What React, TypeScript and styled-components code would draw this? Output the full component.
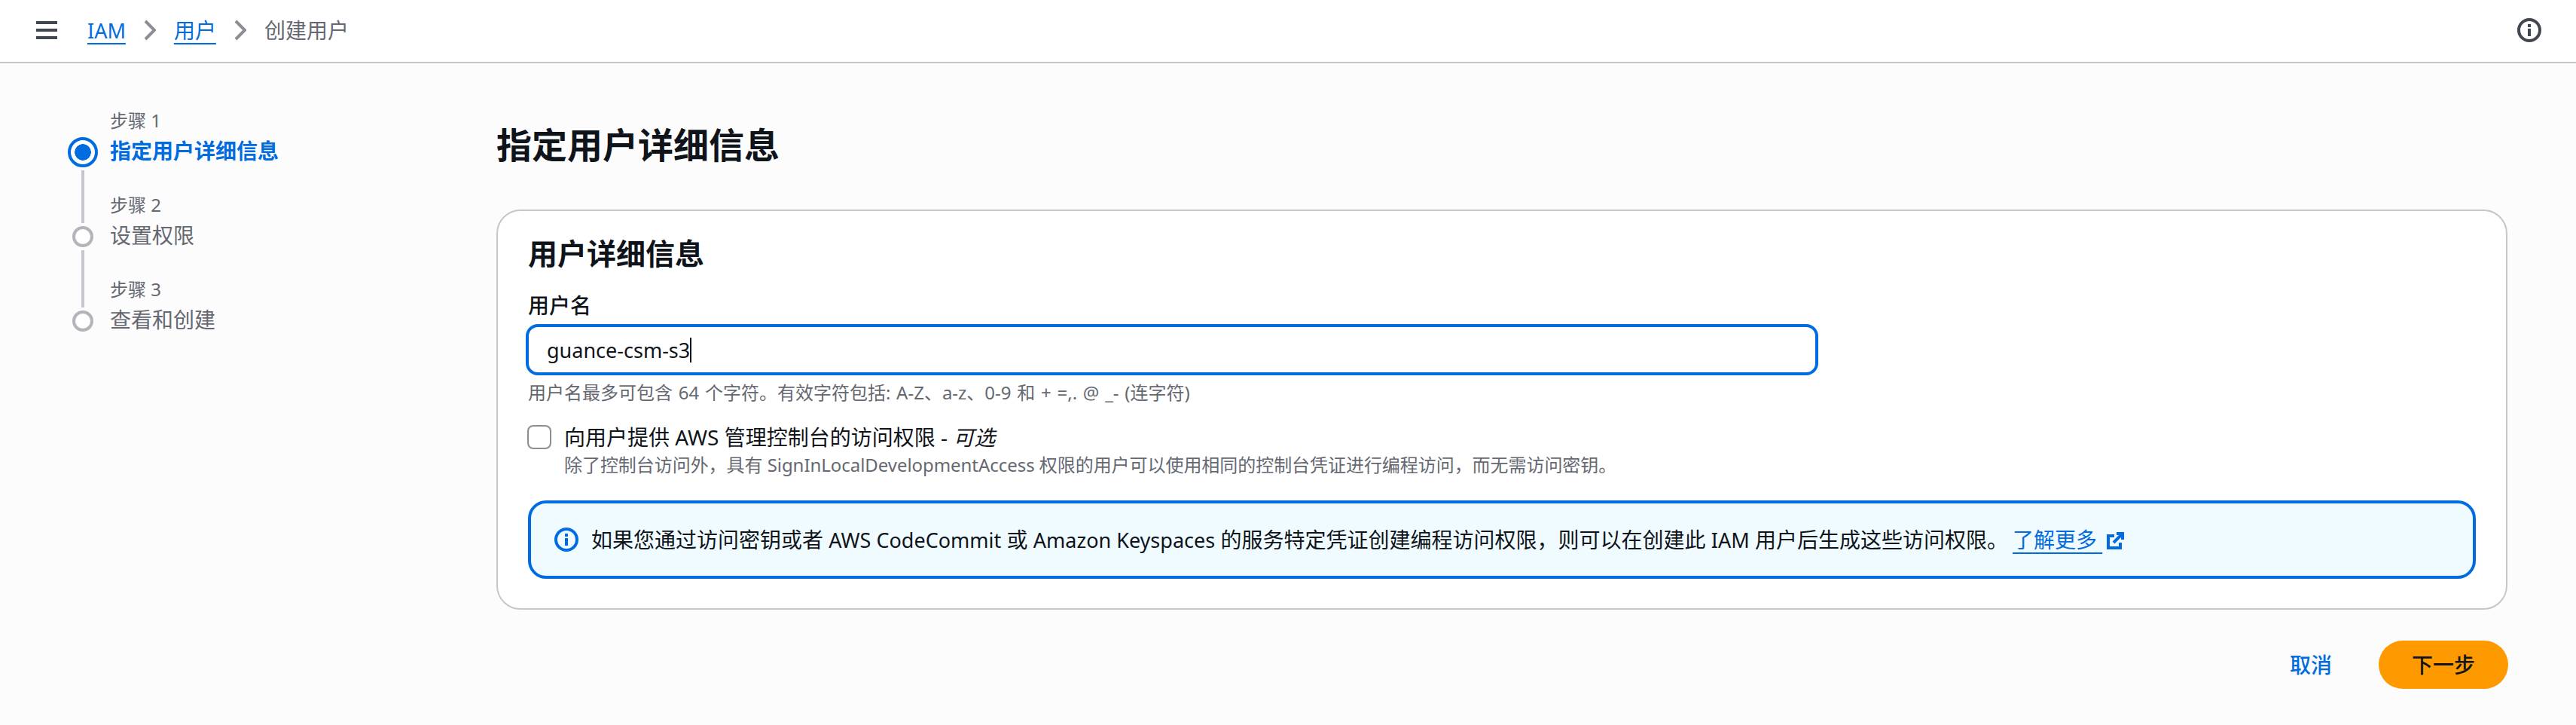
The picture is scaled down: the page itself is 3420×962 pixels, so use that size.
import styled, { createGlobalStyle } from 'styled-components';

const fontStack = '"Noto Sans", "Noto Sans CJK SC", sans-serif';

const GlobalStyle = createGlobalStyle`
  * {
    box-sizing: border-box;
  }

  body {
    margin: 0;
    background: #fcfcfc;
    color: #0f141a;
    font-family: ${fontStack};
  }
`;

const Page = styled.div`
  width: 3420px;
  height: 962px;
  overflow: hidden;
`;

const Header = styled.header`
  display: flex;
  align-items: center;
  justify-content: space-between;

  height: 84px;
  padding: 0 46px 2px 48px;

  border-bottom: 2px solid #c6c6cd;
  background: #fff;
`;

const Breadcrumbs = styled.nav`
  display: flex;
  align-items: center;

  font-size: 28px;
  line-height: 40px;
`;

const MenuButton = styled.svg`
  display: block;
  width: 28px;
  height: 24px;
  margin-right: 40px;
`;

const Chevron = styled.svg`
  display: block;
  width: 16px;
  height: 28px;
  margin: 0 24px;
`;

const Crumb = styled.a`
  color: #006ce0;
  text-decoration: underline 2px;
  text-underline-offset: 6px;
`;

const CurrentCrumb = styled.span`
  color: #656871;
`;

const TopInfo = styled.svg`
  display: block;
  width: 32px;
  height: 32px;
`;

const Latin = styled.span`
  font-size: 27px;
`;

const Body = styled.div`
  display: flex;
  padding: 60px 91px 0 90px;
`;

const Sidebar = styled.ol`
  display: flex;
  flex-direction: column;
  flex: none;

  width: 569px;
  margin: 0;
  padding: 0;

  list-style: none;
`;

const Step = styled.li<{ $height: number }>`
  display: flex;
  gap: 16px;

  height: ${p => p.$height}px;
`;

const Rail = styled.div`
  display: flex;
  flex-direction: column;
  align-items: center;
  justify-content: flex-end;

  width: 40px;
`;

const Connector = styled.span<{ $top: number }>`
  flex: 1;

  width: 4px;
  margin: ${p => p.$top}px 0 -2px;

  background: #c6c6cd;
`;

const Dot = styled.span<{ $active?: boolean }>`
  display: flex;
  flex: none;
  align-items: center;
  justify-content: center;

  height: 40px;

  &::before {
    content: '';
    display: block;
    box-sizing: border-box;
    width: ${p => (p.$active ? 40 : 28)}px;
    height: ${p => (p.$active ? 40 : 28)}px;

    border: 4px solid ${p => (p.$active ? '#006ce0' : '#b4b4bb')};
    border-radius: 50%;
    background: ${p => (p.$active ? 'radial-gradient(circle, #006ce0 10.5px, #fff 11px)' : '#fff')};
  }
`;

const StepText = styled.div`
  display: flex;
  flex-direction: column;
  justify-content: flex-end;
  gap: 4px;

  padding-bottom: 2px;
`;

const StepLabel = styled.span`
  color: #656871;
  font-size: 24px;
  line-height: 32px;
`;

const StepTitle = styled.span<{ $active?: boolean }>`
  color: ${p => (p.$active ? '#006ce0' : '#656871')};
  font-size: 28px;
  font-weight: ${p => (p.$active ? 700 : 400)};
  line-height: 40px;
`;

const Main = styled.main`
  flex: 1;
  padding-top: 20px;
`;

const PageTitle = styled.h1`
  margin: 0 0 58px;

  font-size: 47px;
  font-weight: 700;
  line-height: 56px;
`;

const Card = styled.section`
  padding: 32px 40px 39px;

  border: 2px solid #c6c6cd;
  border-radius: 32px;
  background: #fff;
`;

const CardTitle = styled.h2`
  margin: 0 0 25px;

  font-size: 39px;
  font-weight: 700;
  line-height: 48px;
`;

const FieldLabel = styled.label`
  display: block;
  margin-bottom: 5px;

  font-size: 28px;
  font-weight: 500;
  line-height: 40px;
`;

const InputBox = styled.div`
  display: flex;
  align-items: center;

  width: 1716px;
  height: 68px;
  margin-left: -3px;
  padding-left: 24px;

  border: 4px solid #006ce0;
  border-radius: 16px;
  background: #fff;

  font-size: 27px;
`;

const Caret = styled.span`
  width: 2px;
  height: 33px;
  background: #0f141a;
`;

const Hint = styled.p`
  margin: 7px 0 0;

  color: #656871;
  font-size: 24px;
  line-height: 32px;
  word-spacing: 1.5px;
`;

const CheckRow = styled.div`
  display: flex;
  gap: 17px;

  margin-top: 23px;
`;

const CheckBox = styled.span`
  flex: none;

  width: 32px;
  height: 32px;
  margin: 4px 0 0 -1px;

  border: 2px solid #8c8c94;
  border-radius: 8px;
  background: #fff;
`;

const CheckTitle = styled.div`
  font-size: 28px;
  line-height: 40px;
`;

const CheckHint = styled.div`
  margin-top: 1px;

  color: #656871;
  font-size: 24px;
  line-height: 32px;
  letter-spacing: -0.05px;
`;

const Alert = styled.div`
  display: flex;
  align-items: center;
  gap: 17px;

  height: 104px;
  margin-top: 31px;
  padding-left: 31px;

  border: 4px solid #006ce0;
  border-radius: 24px;
  background: #f0fbff;

  font-size: 28px;
  line-height: 40px;
`;

const AlertIcon = styled.svg`
  display: block;
  flex: none;
  width: 32px;
  height: 32px;
`;

const AlertLink = styled.a`
  margin-left: 6px;

  color: #006ce0;
  text-decoration: underline 2px;
  text-underline-offset: 6px;
  white-space: pre;
`;

const ExternalIcon = styled.svg`
  display: inline-block;
  width: 24px;
  height: 24px;
  margin-left: 6px;
  vertical-align: -2px;
`;

const Actions = styled.div`
  display: flex;
  align-items: center;
  justify-content: flex-end;
  gap: 62px;

  margin: 41px -1px 0 0;
`;

const TextButton = styled.button`
  padding: 0;

  border: none;
  background: none;

  color: #006ce0;
  font: 500 28px/40px ${fontStack};
`;

const PrimaryButton = styled.button`
  width: 172px;
  height: 64px;

  border: none;
  border-radius: 32px;
  background: #ff9900;

  color: #0f141a;
  font: 500 28px/40px ${fontStack};
`;

const steps = [
  { label: '步骤 1', title: '指定用户详细信息', height: 78, active: true },
  { label: '步骤 2', title: '设置权限', height: 112, top: 4 },
  { label: '步骤 3', title: '查看和创建', height: 112, top: -2 },
];

function Info({ color }: { color: string }) {
  return (
    <>
      <circle cx="16" cy="16" r="14" fill="none" stroke={color} strokeWidth="4" />
      <rect x="14" y="14" width="4" height="10" fill={color} />
      <rect x="14" y="8" width="4" height="4" fill={color} />
    </>
  );
}

function ChevronIcon() {
  return (
    <Chevron viewBox="0 0 16 28">
      <path d="M2 2l12 12L2 26" fill="none" stroke="#8c8c94" strokeWidth="4" />
    </Chevron>
  );
}

export default function App() {
  return (
    <Page>
      <GlobalStyle />
      <Header>
        <Breadcrumbs>
          <MenuButton viewBox="0 0 28 24">
            <path d="M0 2h28M0 12h28M0 22h28" stroke="#424650" strokeWidth="4" />
          </MenuButton>
          <Crumb>
            <Latin>IAM</Latin>
          </Crumb>
          <ChevronIcon />
          <Crumb>用户</Crumb>
          <ChevronIcon />
          <CurrentCrumb>创建用户</CurrentCrumb>
        </Breadcrumbs>
        <TopInfo viewBox="0 0 32 32">
          <Info color="#424650" />
        </TopInfo>
      </Header>
      <Body>
        <Sidebar>
          {steps.map(step => (
            <Step key={step.label} $height={step.height}>
              <Rail>
                {step.top !== undefined && <Connector $top={step.top} />}
                <Dot $active={step.active} />
              </Rail>
              <StepText>
                <StepLabel>{step.label}</StepLabel>
                <StepTitle $active={step.active}>{step.title}</StepTitle>
              </StepText>
            </Step>
          ))}
        </Sidebar>
        <Main>
          <PageTitle>指定用户详细信息</PageTitle>
          <Card>
            <CardTitle>用户详细信息</CardTitle>
            <FieldLabel>用户名</FieldLabel>
            <InputBox>
              guance-csm-s3
              <Caret />
            </InputBox>
            <Hint>用户名最多可包含 64 个字符。有效字符包括: A-Z、a-z、0-9 和 + =,. @ _- (连字符)</Hint>
            <CheckRow>
              <CheckBox />
              <div>
                <CheckTitle>
                  向用户提供 AWS 管理控制台的访问权限 - <em>可选</em>
                </CheckTitle>
                <CheckHint>
                  除了控制台访问外，具有 SignInLocalDevelopmentAccess 权限的用户可以使用相同的控制台凭证进行编程访问，而无需访问密钥。
                </CheckHint>
              </div>
            </CheckRow>
            <Alert>
              <AlertIcon viewBox="0 0 32 32">
                <Info color="#006ce0" />
              </AlertIcon>
              <span>
                如果您通过访问密钥或者 <Latin>AWS CodeCommit</Latin> 或 <Latin>Amazon Keyspaces</Latin> 的服务特定凭证创建编程访问权限，则可以在创建此 <Latin>IAM</Latin> 用户后生成这些访问权限。
                <AlertLink>了解更多 </AlertLink>
                <ExternalIcon viewBox="0 0 24 24">
                  <path d="M10 6H2v16h16v-7" fill="none" stroke="#006ce0" strokeWidth="4" />
                  <path d="M13 3h8v8M21 3L9 15" fill="none" stroke="#006ce0" strokeWidth="4" />
                </ExternalIcon>
              </span>
            </Alert>
          </Card>
          <Actions>
            <TextButton>取消</TextButton>
            <PrimaryButton>下一步</PrimaryButton>
          </Actions>
        </Main>
      </Body>
    </Page>
  );
}
